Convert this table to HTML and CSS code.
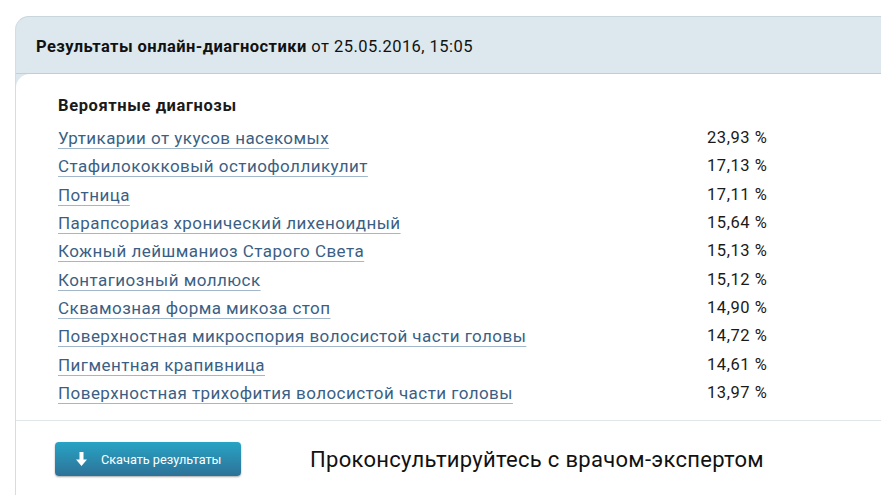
FILE: index.html
```html
<!DOCTYPE html>
<html lang="ru">
<head>
<meta charset="utf-8">
<link rel="stylesheet" href="styles.css">
</head>
<body>
<div class="card">
  <div class="card-head"><b>Результаты онлайн-диагностики</b> от 25.05.2016, 15:05</div>
  <div class="card-body">
    <div class="results">
      <div class="results-title">Вероятные диагнозы</div>
      <div class="row"><a href="#">Уртикарии от укусов насекомых</a><span class="pct">23,93 %</span></div>
      <div class="row"><a href="#">Стафилококковый остиофолликулит</a><span class="pct">17,13 %</span></div>
      <div class="row"><a href="#">Потница</a><span class="pct">17,11 %</span></div>
      <div class="row"><a href="#">Парапсориаз хронический лихеноидный</a><span class="pct">15,64 %</span></div>
      <div class="row"><a href="#">Кожный лейшманиоз Старого Света</a><span class="pct">15,13 %</span></div>
      <div class="row"><a href="#">Контагиозный моллюск</a><span class="pct">15,12 %</span></div>
      <div class="row"><a href="#">Сквамозная форма микоза стоп</a><span class="pct">14,90 %</span></div>
      <div class="row"><a href="#">Поверхностная микроспория волосистой части головы</a><span class="pct">14,72 %</span></div>
      <div class="row"><a href="#">Пигментная крапивница</a><span class="pct">14,61 %</span></div>
      <div class="row"><a href="#">Поверхностная трихофития волосистой части головы</a><span class="pct">13,97 %</span></div>
    </div>
    <div class="actions">
      <a class="btn" href="#"><svg class="btn-icon" width="11" height="14" viewBox="0 0 11 14"><path d="M3.5 0h4v7.5h3.5l-5.5 6.5-5.5-6.5h3.5z" fill="#fff"/></svg>Скачать результаты</a>
      <div class="consult">Проконсультируйтесь с врачом-экспертом</div>
    </div>
  </div>
</div>
</body>
</html>
```
FILE: styles.css
```css
html, body {
  margin: 0;
  padding: 0;
  background: #fff;
  overflow: hidden;
}
body {
  font-family: Roboto, "Liberation Sans", sans-serif;
  color: #1a1a1a;
  padding: 16px 0 0 15px;
}
.card {
  width: 900px;
  border-left: 1px solid #d3dde2;
  border-top: 1px solid #c9d6dc;
  border-top-left-radius: 14px;
  background: #dce8ee;
}
.card-head {
  height: 57px;
  box-sizing: border-box;
  padding: 19px 0 0 20px;
  font-size: 16.5px;
  line-height: 22px;
  letter-spacing: 0.45px;
  color: #111;
  border-bottom: 1px solid #c2d0d6;
}
.card-head b {
  font-weight: 700;
}
.card-body {
  background: #fff;
  border-top-left-radius: 14px;
  padding-top: 1px;
  height: 430px;
}
.results {
  padding: 20px 0 13px 42px;
  border-bottom: 1px solid #e1e6e9;
}
.results-title {
  font-weight: 700;
  font-size: 16.5px;
  letter-spacing: 0.6px;
  line-height: 22px;
  margin-bottom: 7px;
}
.row {
  display: flex;
  height: 28.33px;
  line-height: 28px;
  font-size: 17px;
}
.row a {
  width: 649px;
  color: #3b5f84;
  letter-spacing: 0.45px;
  text-decoration: underline;
  text-decoration-color: #a3b7ca;
  text-underline-offset: 4px;
}
.pct {
  font-size: 16.5px;
  letter-spacing: 0.55px;
  color: #1a1a1a;
}
.actions {
  display: flex;
  align-items: center;
  padding: 21px 0 0 39px;
}
.btn {
  display: flex;
  align-items: center;
  width: 186px;
  height: 34px;
  box-sizing: border-box;
  padding-left: 21px;
  border-radius: 4px;
  background: linear-gradient(#27a4c4, #2e7198);
  box-shadow: 0 1px 2px rgba(0,0,0,0.35);
  color: #fff;
  font-size: 12.7px;
  text-decoration: none;
}
.btn-icon {
  margin-right: 14px;
}
.consult {
  margin-left: 69px;
  margin-top: 1px;
  font-size: 22px;
  letter-spacing: 0.3px;
  color: #111;
}
```
